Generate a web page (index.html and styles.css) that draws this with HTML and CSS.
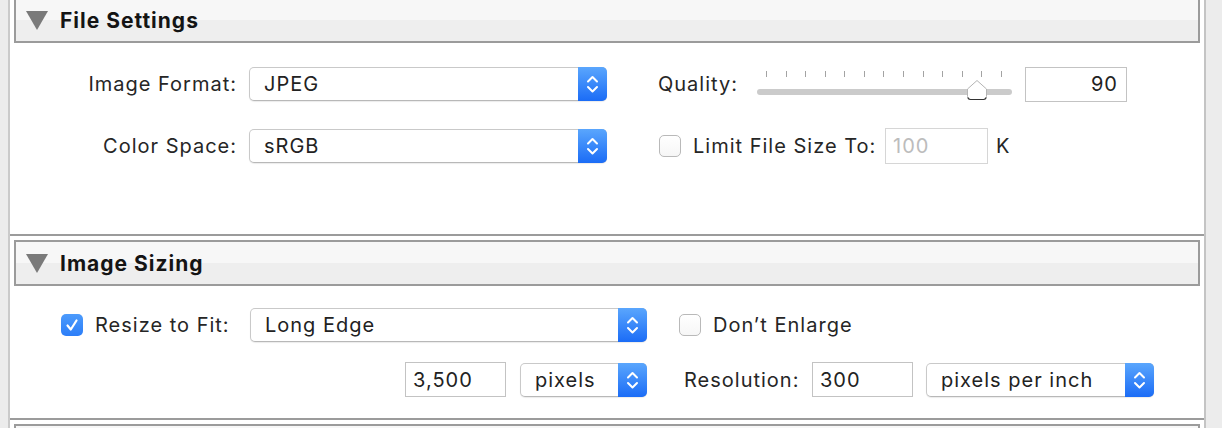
FILE: index.html
```html
<!DOCTYPE html>
<html>
<head>
<meta charset="utf-8">
<link rel="stylesheet" href="styles.css">
</head>
<body>
<div class="panel">
  <section class="sec sec-first">
    <div class="sec-head">
      <svg class="tri" width="22" height="19" viewBox="0 0 22 19"><polygon points="0,0 22,0 11,19" fill="#7a7a7a"/></svg>
      <span class="sec-title">File Settings</span>
    </div>
    <div class="sec-body body-file">
      <div class="row">
        <span class="lbl lbl-file">Image Format:</span>
        <div class="popup pop-file">
          <span class="pop-text">JPEG</span>
          <span class="pop-btn"><svg width="29" height="34" viewBox="0 0 29 34"><path d="M10 14.5 L14.5 10 L19 14.5 M10 20 L14.5 24.5 L19 20" fill="none" stroke="#fff" stroke-width="2" stroke-linecap="round" stroke-linejoin="round"/></svg></span>
        </div>
        <div class="right-group">
          <span class="lbl lbl-quality">Quality:</span>
          <div class="slider">
            <div class="ticks">
              <i></i><i></i><i></i><i></i><i></i><i></i><i></i><i></i><i></i><i></i><i></i><i></i><i></i>
            </div>
            <div class="track"></div>
            <svg class="thumb" width="24" height="22" viewBox="0 0 24 22"><path d="M12 1.5 L21.5 10 L21.5 17.5 Q21.5 20.5 18.5 20.5 L5.5 20.5 Q2.5 20.5 2.5 17.5 L2.5 10 Z" fill="#fff" stroke="#b4b4b4" stroke-width="1"/><path d="M2.8 18.5 Q3.5 20.5 5.5 20.5 L18.5 20.5 Q20.5 20.5 21.2 18.5" fill="none" stroke="#333" stroke-width="1.2"/></svg>
          </div>
          <div class="field field-quality">90</div>
        </div>
      </div>
      <div class="row row2">
        <span class="lbl lbl-file">Color Space:</span>
        <div class="popup pop-file">
          <span class="pop-text">sRGB</span>
          <span class="pop-btn"><svg width="29" height="34" viewBox="0 0 29 34"><path d="M10 14.5 L14.5 10 L19 14.5 M10 20 L14.5 24.5 L19 20" fill="none" stroke="#fff" stroke-width="2" stroke-linecap="round" stroke-linejoin="round"/></svg></span>
        </div>
        <div class="right-group rg2">
          <span class="check"></span>
          <span class="lbl lbl-limit">Limit File Size To:</span>
          <div class="field field-limit">100</div>
          <span class="lbl lbl-k">K</span>
        </div>
      </div>
    </div>
  </section>

  <section class="sec">
    <div class="sec-head">
      <svg class="tri" width="22" height="19" viewBox="0 0 22 19"><polygon points="0,0 22,0 11,19" fill="#7a7a7a"/></svg>
      <span class="sec-title">Image Sizing</span>
    </div>
    <div class="sec-body body-size">
      <div class="row srow1">
        <span class="check checked"><svg width="22" height="22" viewBox="0 0 22 22"><path d="M6.5 11.5 L9.8 15.5 L15.5 6.5" fill="none" stroke="#fff" stroke-width="2.2" stroke-linecap="round" stroke-linejoin="round"/></svg></span>
        <span class="lbl lbl-resize">Resize to Fit:</span>
        <div class="popup pop-long">
          <span class="pop-text">Long Edge</span>
          <span class="pop-btn"><svg width="29" height="34" viewBox="0 0 29 34"><path d="M10 14.5 L14.5 10 L19 14.5 M10 20 L14.5 24.5 L19 20" fill="none" stroke="#fff" stroke-width="2" stroke-linecap="round" stroke-linejoin="round"/></svg></span>
        </div>
        <span class="check check-enlarge"></span>
        <span class="lbl lbl-enlarge">Don’t Enlarge</span>
      </div>
      <div class="row srow2">
        <div class="field field-size">3,500</div>
        <div class="popup pop-pixels">
          <span class="pop-text">pixels</span>
          <span class="pop-btn"><svg width="29" height="34" viewBox="0 0 29 34"><path d="M10 14.5 L14.5 10 L19 14.5 M10 20 L14.5 24.5 L19 20" fill="none" stroke="#fff" stroke-width="2" stroke-linecap="round" stroke-linejoin="round"/></svg></span>
        </div>
        <span class="lbl lbl-res">Resolution:</span>
        <div class="field field-res">300</div>
        <div class="popup pop-ppi">
          <span class="pop-text">pixels per inch</span>
          <span class="pop-btn"><svg width="29" height="34" viewBox="0 0 29 34"><path d="M10 14.5 L14.5 10 L19 14.5 M10 20 L14.5 24.5 L19 20" fill="none" stroke="#fff" stroke-width="2" stroke-linecap="round" stroke-linejoin="round"/></svg></span>
        </div>
      </div>
    </div>
  </section>

  <section class="sec">
    <div class="sec-head"></div>
  </section>
</div>
</body>
</html>
```

FILE: styles.css
```css
html, body {
  margin: 0;
  padding: 0;
}
body {
  background: #ececec;
  width: 1222px;
  height: 428px;
  overflow: hidden;
  font-family: Inter, "Liberation Sans", sans-serif;
  color: #262626;
}
.panel {
  margin-left: 8px;
  margin-top: -3px;
  width: 1194px;
  background: #fff;
  border-left: 2px solid #cacaca;
  border-right: 2px solid #c4c4c4;
  min-height: 500px;
}
.sec {
  padding-top: 4px;
}
.sec-first {
  padding-top: 0;
}
.sec-head {
  margin: 0 4px;
  height: 42px;
  border: 2px solid #9b9b9b;
  background: linear-gradient(#f7f7f7 0, #f7f7f7 50%, #eeeeee 50%, #eeeeee 100%);
  display: flex;
  align-items: center;
}
.tri {
  margin-left: 10px;
  margin-top: 1px;
  flex: none;
}
.sec-title {
  margin-left: 12px;
  font-weight: 700;
  font-size: 21px;
  letter-spacing: 1px;
  color: #141414;
}
.sec-body {
  border-bottom: 2px solid #9b9b9b;
  box-sizing: border-box;
}
.body-file {
  height: 193px;
  padding-top: 23px;
}
.body-size {
  height: 134px;
  padding-top: 21px;
}
.row {
  display: flex;
  align-items: center;
  height: 36px;
}
.row2 {
  margin-top: 26px;
}
.lbl {
  font-size: 20px;
  letter-spacing: 1px;
  white-space: nowrap;
  flex: none;
}
.lbl-file {
  width: 227px;
  text-align: right;
}
.popup {
  flex: none;
  box-sizing: border-box;
  height: 34px;
  border: 1px solid #c9c9c9;
  border-bottom-color: #b8b8b8;
  border-radius: 5px;
  background: #fff;
  box-shadow: 0 1px 1px rgba(0, 0, 0, 0.08);
  display: flex;
  align-items: center;
}
.pop-file {
  margin-left: 12px;
  width: 358px;
}
.pop-text {
  flex: 1;
  padding-left: 14px;
  font-size: 20px;
  letter-spacing: 1px;
  color: #222;
  white-space: nowrap;
}
.pop-btn {
  align-self: stretch;
  margin: -1px -1px -1px 0;
  width: 29px;
  border-radius: 0 5px 5px 0;
  background: linear-gradient(#5aa6fd, #1b6cf6);
  display: flex;
  align-items: center;
  justify-content: center;
}
.pop-btn svg {
  display: block;
}
.right-group {
  margin-left: 51px;
  display: flex;
  align-items: center;
  height: 36px;
}
.lbl-quality {
  width: 99px;
}
.slider {
  position: relative;
  width: 255px;
  height: 36px;
  display: flex;
  flex-direction: column;
}
.ticks {
  display: flex;
  justify-content: space-between;
  padding: 0 10px 0 9px;
  margin-top: 5px;
  height: 6px;
}
.ticks i {
  display: block;
  width: 1px;
  height: 6px;
  background: #a3a3a3;
}
.track {
  margin-top: 12px;
  height: 6px;
  border-radius: 3px;
  background: #cbcbcb;
}
.thumb {
  position: absolute;
  left: 208px;
  top: 13px;
}
.field {
  flex: none;
  box-sizing: border-box;
  height: 35px;
  border: 1px solid #c3c3c3;
  background: #fff;
  font-size: 20px;
  letter-spacing: 1px;
  color: #222;
  display: flex;
  align-items: center;
  padding: 0 7px;
}
.field-quality {
  margin-left: 13px;
  width: 102px;
  justify-content: flex-end;
  padding-right: 8px;
}
.rg2 {
  margin-left: 52px;
}
.check {
  flex: none;
  box-sizing: border-box;
  width: 22px;
  height: 22px;
  border: 1px solid #b9b9b9;
  border-radius: 5px;
  background: linear-gradient(#fff, #f6f6f6);
}
.check.checked {
  border: none;
  background: linear-gradient(#4c9bfc, #2c7ef8);
}
.check svg {
  display: block;
}
.lbl-limit {
  margin-left: 12px;
  width: 192px;
}
.field-limit {
  width: 103px;
  height: 36px;
  border-color: #d6d6d6;
  color: #bcbcbc;
}
.lbl-k {
  margin-left: 8px;
}
.srow1 {
  height: 35px;
  padding-left: 51px;
}
.lbl-resize {
  margin-left: 12px;
  width: 155px;
}
.pop-long {
  width: 397px;
}
.check-enlarge {
  margin-left: 32px;
}
.lbl-enlarge {
  margin-left: 12px;
}
.srow2 {
  height: 35px;
  margin-top: 20px;
  padding-left: 395px;
}
.field-size {
  width: 101px;
}
.pop-pixels {
  margin-left: 14px;
  width: 127px;
}
.lbl-res {
  margin-left: 37px;
  width: 128px;
}
.field-res {
  width: 101px;
}
.pop-ppi {
  margin-left: 13px;
  width: 228px;
}
```
